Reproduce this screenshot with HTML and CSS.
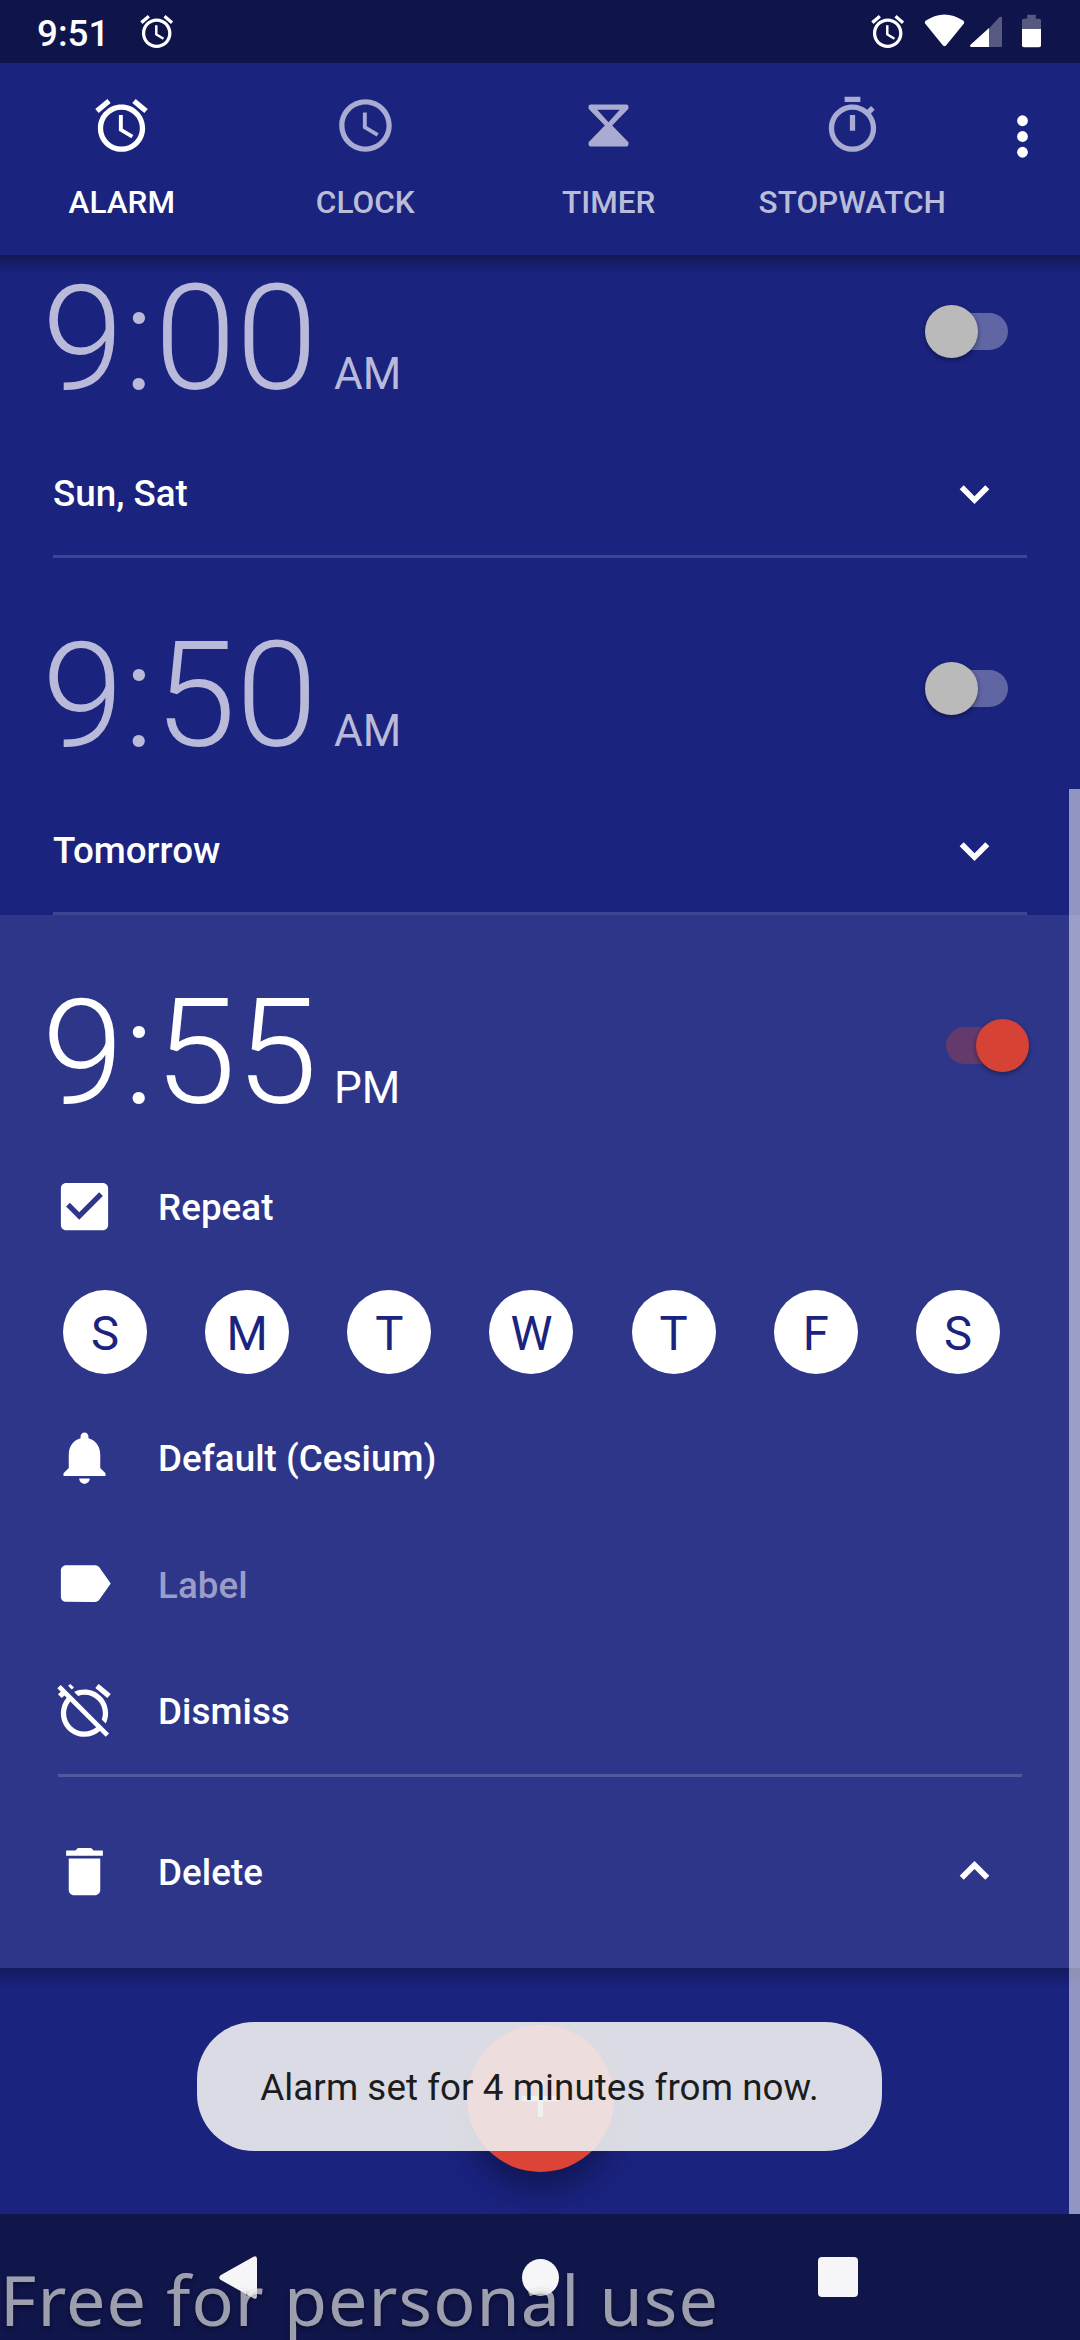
FILE: index.html
```html
<!DOCTYPE html>
<html lang="en">
<head>
<meta charset="utf-8">
<title>Clock – Alarms</title>
<link rel="stylesheet" href="styles.css">
</head>
<body>
<svg class="defs" aria-hidden="true">
  <symbol id="i-alarm" viewBox="0 0 24 24"><path d="M22 5.720l-4.600-3.860-1.290 1.530 4.600 3.860L22 5.720zM7.880 3.390L6.600 1.860 2 5.710l1.290 1.530 4.590-3.850zM12.500 8H11v6l4.750 2.850.75-1.230-4-2.370V8zM12 4c-4.970 0-9 4.030-9 9s4.020 9 9 9c4.970 0 9-4.030 9-9s-4.030-9-9-9zm0 16c-3.870 0-7-3.130-7-7s3.130-7 7-7 7 3.130 7 7-3.130 7-7 7z"/></symbol>
  <symbol id="i-more" viewBox="0 0 24 24"><path d="M7.900 8.900L12 13l4.100-4.100 1.550 1.500L12 16l-5.650-5.600z"/></symbol>
</svg>
<div class="screen">
  <header class="status">
    <span class="status-time">9:51</span>
    <svg class="status-alarm"><use href="#i-alarm"/></svg>
    <div class="status-right">
      <svg class="status-alarm"><use href="#i-alarm"/></svg>
      <svg class="wifi" viewBox="0 0 41 33"><path d="M2 6.500Q20.500-5.500 39 6.500Q41 8 39.700 9.800L22 31.500Q20.500 33 19 31.500L1.300 9.800Q0 8 2 6.500z"/></svg>
      <svg class="signal" viewBox="0 0 32 31"><path opacity=".3" d="M19 12.500L29.500 1Q32 0 32 2V29.500Q32 31 30.500 31H19z"/><path d="M19 12v19H1.500Q-1 30.500.8 28.500z"/></svg>
      <svg class="battery" viewBox="0 0 20 34"><path opacity=".3" d="M5.500 0h9v4H18q2 0 2 2v9H0V6q0-2 2-2h3.500z"/><path d="M0 15h20v17q0 2-2 2H2q-2 0-2-2z"/></svg>
    </div>
  </header>

  <nav class="tabs">
    <a class="tab active"><svg class="icon"><use href="#i-alarm"/></svg><span>ALARM</span></a>
    <a class="tab"><svg class="icon" viewBox="0 0 24 24"><path d="M11.990 2C6.470 2 2 6.480 2 12s4.470 10 9.990 10C17.520 22 22 17.520 22 12S17.520 2 11.990 2zM12 20c-4.420 0-8-3.580-8-8s3.580-8 8-8 8 3.580 8 8-3.580 8-8 8zm.5-13H11v6l5.250 3.150.75-1.230-4.500-2.670z"/></svg><span>CLOCK</span></a>
    <a class="tab"><svg class="icon" viewBox="0 0 24 24"><path fill-rule="evenodd" d="M5.200 4h13.600q.8 0 .8.800v.8L13.400 12l6.200 6.400v.8q0 .8-.8.800H5.200q-.8 0-.8-.8v-.8L10.600 12 4.400 5.600v-.8q0-.8.800-.8zM7.700 6L12 10.800 16.300 6z"/></svg><span>TIMER</span></a>
    <a class="tab"><svg class="icon" viewBox="0 0 24 24"><path d="M15 1H9v2h6V1zm-4 13h2V8h-2v6zm8.030-6.610l1.420-1.420c-.43-.51-.9-.99-1.410-1.410l-1.420 1.420C16.070 4.740 14.120 4 12 4c-4.970 0-9 4.030-9 9s4.020 9 9 9 9-4.030 9-9c0-2.120-.74-4.070-1.970-5.610zM12 20c-3.870 0-7-3.130-7-7s3.130-7 7-7 7 3.130 7 7-3.130 7-7 7z"/></svg><span>STOPWATCH</span></a>
    <a class="overflow"><svg class="icon" viewBox="0 0 24 24"><circle cx="12" cy="6" r="2.050"/><circle cx="12" cy="12" r="2.050"/><circle cx="12" cy="18" r="2.050"/></svg></a>
  </nav>

  <main class="content">
    <section class="alarm">
      <div class="time-row"><div class="time">9:00<small>AM</small></div><span class="switch"></span></div>
      <div class="summary"><span>Sun, Sat</span><svg class="chevron"><use href="#i-more"/></svg></div>
      <hr class="rule">
    </section>
    <section class="alarm">
      <div class="time-row"><div class="time">9:50<small>AM</small></div><span class="switch"></span></div>
      <div class="summary"><span>Tomorrow</span><svg class="chevron"><use href="#i-more"/></svg></div>
      <hr class="rule">
    </section>
    <section class="alarm expanded">
      <div class="time-row"><div class="time">9:55<small>PM</small></div><span class="switch on"></span></div>
      <div class="option repeat"><svg class="icon" viewBox="0 0 24 24"><path d="M19 3H5c-1.110 0-2 .9-2 2v14c0 1.100.89 2 2 2h14c1.110 0 2-.9 2-2V5c0-1.100-.89-2-2-2zm-9 14l-5-5 1.410-1.410L10 14.170l7.590-7.590L19 8l-9 9z"/></svg><span>Repeat</span></div>
      <div class="days"><b>S</b><b>M</b><b>T</b><b>W</b><b>T</b><b>F</b><b>S</b></div>
      <div class="option"><svg class="icon" viewBox="0 0 24 24"><path d="M12 22c1.100 0 2-.9 2-2h-4c0 1.100.89 2 2 2zm6-6v-5c0-3.070-1.640-5.640-4.500-6.320V4c0-.83-.67-1.500-1.500-1.500s-1.500.67-1.500 1.500v.68C7.630 5.360 6 7.920 6 11v5l-2 2v1h16v-1l-2-2z"/></svg><span>Default (Cesium)</span></div>
      <div class="option"><svg class="icon" viewBox="0 0 24 24"><path d="M17.630 5.840C17.270 5.330 16.670 5 16 5L5 5.010C3.900 5.010 3 5.900 3 7v10c0 1.100.9 1.990 2 1.990L16 19c.67 0 1.270-.33 1.630-.84L22 12l-4.370-6.160z"/></svg><span class="hint">Label</span></div>
      <div class="option"><svg class="icon" viewBox="0 0 24 24"><path d="M12 6c3.870 0 7 3.130 7 7 0 .84-.16 1.650-.43 2.400l1.520 1.520c.58-1.190.91-2.510.91-3.920 0-4.970-4.030-9-9-9-1.410 0-2.730.33-3.920.91L9.600 6.430C10.350 6.160 11.160 6 12 6zm10-.28l-4.600-3.860-1.290 1.530 4.600 3.860L22 5.720zM2.920 2.290L1.650 3.570 2.980 4.900l-1.110.93 1.420 1.420 1.110-.94.8.8C3.830 8.690 3 10.750 3 13c0 4.970 4.020 9 9 9 2.250 0 4.310-.83 5.890-2.200l2.200 2.200 1.270-1.270L3.890 3.270l-.97-.98zm13.550 16.100C15.260 19.390 13.700 20 12 20c-3.870 0-7-3.130-7-7 0-1.700.61-3.260 1.610-4.470l9.860 9.860zM8.020 3.280L6.600 1.860l-.86.71 1.420 1.420.86-.71z"/></svg><span>Dismiss</span></div>
      <hr class="rule inner">
      <div class="option delete"><svg class="icon" viewBox="0 0 24 24"><path d="M6 19c0 1.100.9 2 2 2h8c1.100 0 2-.9 2-2V7H6v12zM19 4h-3.500l-1-1h-5l-1 1H5v2h14V4z"/></svg><span>Delete</span><svg class="chevron up"><use href="#i-more"/></svg></div>
    </section>
    <footer class="actions">
      <div class="fab"><svg class="icon" viewBox="0 0 24 24"><path d="M19 13h-6v6h-2v-6H5v-2h6V5h2v6h6v2z"/></svg></div>
    </footer>
    <div class="scrollbar"></div>
    <div class="toast">Alarm set for 4 minutes from now.</div>
  </main>

  <footer class="navbar">
    <svg class="nav-back" viewBox="0 0 38 43"><path d="M1.500 19.200L34 1Q38-1 38 3V40Q38 44 34 42L1.500 23.800Q-1 21.500 1.500 19.200z"/></svg>
    <span class="nav-home"></span>
    <span class="nav-recent"></span>
    <div class="watermark">Free for personal use</div>
  </footer>
</div>
</body>
</html>
```

FILE: styles.css
```css
* { box-sizing: border-box; }
body { margin: 0; background: #1a237e; color: #fff; font-family: Roboto, "Liberation Sans", sans-serif; }
.defs { position: absolute; width: 0; height: 0; }
svg { display: block; fill: currentColor; flex: none; }
.icon { width: 63px; height: 63px; }
.screen { display: flex; flex-direction: column; width: 1080px; height: 2340px; overflow: hidden; }

/* Status bar */
.status { display: flex; align-items: flex-start; height: 63px; padding: 12px 39px 0 37px; background: #0f144a; }
.status-time { width: 100px; font-size: 36.750px; font-weight: 500; line-height: 43px; }
.status-alarm { width: 39.400px; height: 39.400px; }
.status-right { display: flex; margin-left: auto; }
.wifi { width: 41px; height: 33px; margin: 2px 5px 0 17px; }
.signal { width: 32px; height: 31px; margin: 4px 20px 0 0; }
.battery { width: 19px; height: 34px; margin-top: 2px; }

/* Tabs */
.tabs { display: flex; height: 192px; background: #1a237e; }
.tab { display: flex; flex-direction: column; align-items: center; width: 243.500px; padding-top: 31px; color: #a9abd2; }
.tab span { margin-top: 27px; font-size: 31.500px; font-weight: 500; line-height: 37px; color: #babdd8; }
.tab.active, .tab.active span { color: #fff; }
.overflow { flex: 1; padding: 42px 0 0 17px; }

/* Alarm list */
.content { position: relative; flex: none; height: 1959px; overflow: hidden; }
.content::before { content: ""; position: absolute; inset: 0 0 auto; height: 19px; background: linear-gradient(rgba(16, 20, 70, .75), rgba(16, 20, 70, 0)); }
.alarm { height: 357px; }
.alarm:first-child { height: 303px; }
.alarm:first-child .time-row { padding-top: 0; height: 171px; }
.time-row { display: flex; justify-content: space-between; align-items: flex-start; height: 225px; padding: 54px 72px 0 42px; color: #b9bad9; }
.time { margin-top: 4px; font-size: 147px; font-weight: 300; line-height: 160px; }
.time small { margin-left: 16.500px; font-size: 44.100px; font-weight: 400; line-height: 1; }
.switch { position: relative; width: 83px; height: 53px; margin-top: 50px; }
.switch::before { content: ""; position: absolute; left: 11px; right: 0; top: 8px; height: 37px; border-radius: 19px; background: #6065a4; }
.switch::after { content: ""; position: absolute; left: 0; top: 0; width: 53px; height: 53px; border-radius: 50%; background: #bababa; box-shadow: 0 2px 5px rgba(0, 0, 0, .4); }
.summary { display: flex; align-items: center; justify-content: space-between; height: 129px; padding: 0 74px 0 53px; font-size: 36.750px; font-weight: 500; }
.summary span { margin-top: 5px; }
.summary .chevron { margin-top: 6px; }
.chevron { width: 63px; height: 63px; }
.rule { height: 3px; margin: 0 53px; border: 0; background: #3d4491; }

/* Expanded alarm */
.expanded { height: 1053px; background: #2e3689; }
.expanded .time-row { color: #fff; padding-right: 51px; }
.switch.on::before { left: 0; right: 11px; background: #643a6c; }
.switch.on::after { left: auto; right: 0; background: #d64236; }
.option { display: flex; align-items: center; gap: 42px; height: 126.500px; padding: 0 74px 0 53px; font-size: 36.750px; font-weight: 500; letter-spacing: .05px; }
.option span { padding-top: 3px; }
.option .hint { color: #9a9dc8; }
.option.repeat { height: 132px; }
.days { display: flex; justify-content: space-between; padding: 18px 80px 20px 63px; }
.days b { width: 84px; height: 84px; border-radius: 50%; background: #fff; color: #1a237e; font-size: 47.250px; font-weight: 400; line-height: 88px; text-align: center; }
.rule.inner { margin: 0 58px; background: #52589d; }
.option.delete { height: 189px; }
.delete .chevron { margin-left: auto; transform: rotate(180deg); }

/* New alarm button, toast, scrollbar */
.actions { display: flex; justify-content: center; height: 246px; padding-top: 57px; background: linear-gradient(#141a5e, #1a237e 20px); }
.fab { display: flex; align-items: center; justify-content: center; width: 147px; height: 147px; border-radius: 50%; background: #db4437; box-shadow: 0 16px 30px rgba(10, 12, 50, .55); }
.scrollbar { position: absolute; right: 0; top: 534px; bottom: 0; width: 11px; background: rgba(255, 255, 255, .52); }
.toast { position: absolute; left: 197px; top: 1767px; width: 685px; height: 129px; border-radius: 57px; background: rgba(238, 238, 238, .905); color: #1c1c1c; font-size: 36.750px; line-height: 132px; letter-spacing: .07px; text-align: center; }

/* Navigation bar */
.navbar { position: relative; display: flex; align-items: center; height: 126px; padding-left: 219px; background: #10154a; color: #f6f6f9; overflow: hidden; }
.nav-back { width: 38px; height: 43px; }
.nav-home { width: 37px; height: 37px; margin-left: 265px; border-radius: 50%; background: currentColor; }
.nav-recent { width: 40px; height: 40px; margin-left: 259px; border-radius: 4px; background: currentColor; }
.watermark { position: absolute; left: 0; top: 45px; font-family: "Noto Sans", sans-serif; font-size: 70px; line-height: 80px; letter-spacing: 1.050px; white-space: nowrap; color: rgba(255, 255, 255, .6); text-shadow: 0 2px 4px rgba(0, 0, 0, .4); }
```
